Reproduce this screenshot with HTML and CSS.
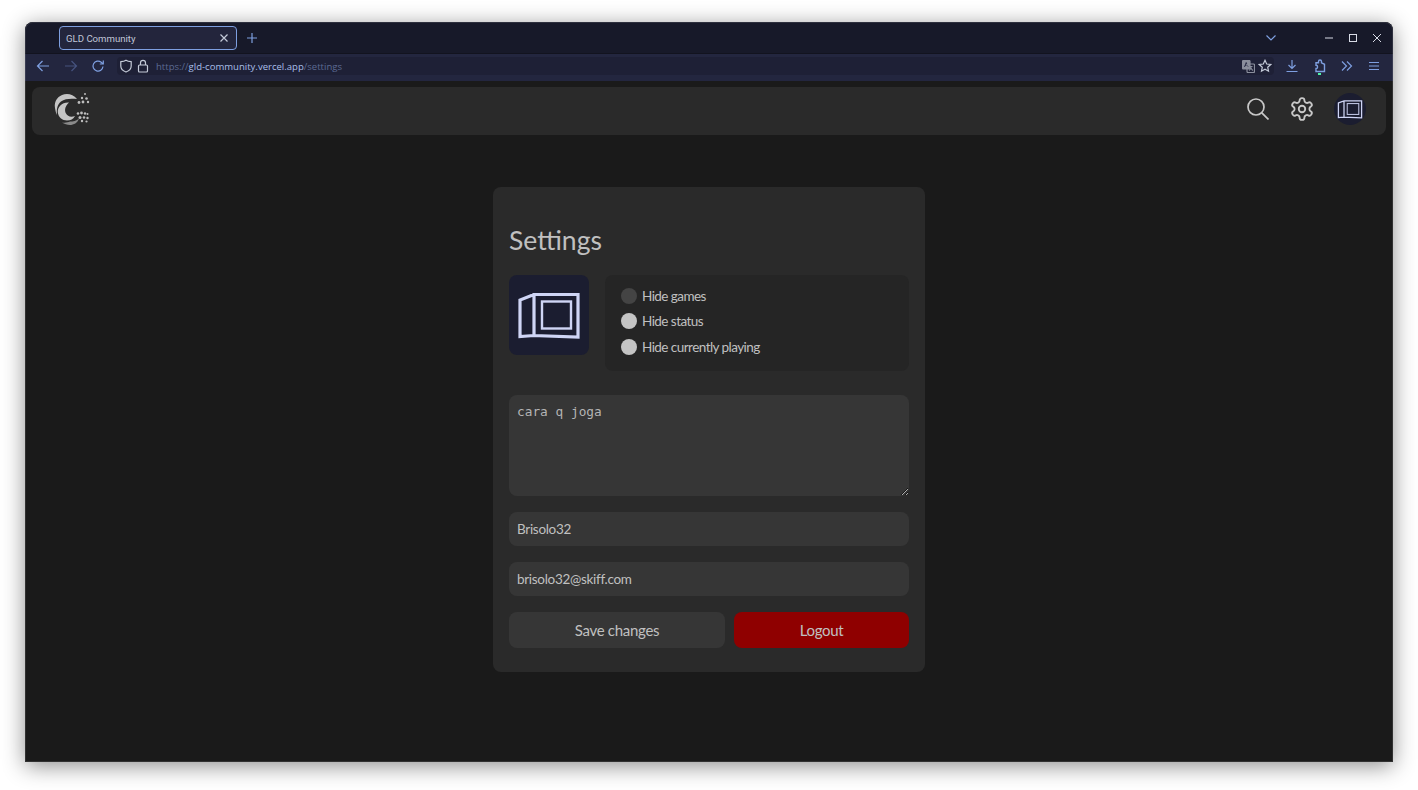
FILE: index.html
```html
<!DOCTYPE html>
<html lang="en">
<head>
<meta charset="utf-8">
<title>GLD Community</title>
<link rel="stylesheet" href="styles.css">
</head>
<body>
<svg class="defs" width="0" height="0" aria-hidden="true">
  <symbol id="avatar" viewBox="0 0 80 80">
    <path class="av-thick" d="M25 19.500H69V62L25 60.500ZM25 19.500L11 25V61.500L25 60.500"/>
    <rect class="av-thin" x="33" y="26.500" width="29" height="27"/>
  </symbol>
</svg>
<div class="window">
  <div class="tabbar">
    <div class="tab">
      <span class="tab-title">GLD Community</span>
      <svg class="ico tab-close" width="10" height="10" viewBox="0 0 10 10"><path d="M1.500 1.500l7 7M8.500 1.500l-7 7"/></svg>
    </div>
    <svg class="ico accent new-tab" width="12" height="12" viewBox="0 0 12 12"><path d="M6 1v10M1 6h10"/></svg>
    <div class="spacer"></div>
    <svg class="ico accent chevron" width="12" height="8" viewBox="0 0 12 8"><path d="M1.500 1.500L6 6l4.500-4.500"/></svg>
    <div class="win-controls">
      <svg class="ico white" width="10" height="10" viewBox="0 0 10 10"><path d="M1 5h8"/></svg>
      <svg class="ico white" width="10" height="10" viewBox="0 0 10 10"><rect x="1.500" y="1.500" width="7" height="7"/></svg>
      <svg class="ico white" width="10" height="10" viewBox="0 0 10 10"><path d="M1 1l8 8M9 1l-8 8"/></svg>
    </div>
  </div>
  <div class="navbar">
    <svg class="ico accent" width="14" height="14" viewBox="0 0 14 14"><path d="M13 7H1.500M6.500 2L1.500 7l5 5"/></svg>
    <svg class="ico dim fwd" width="14" height="14" viewBox="0 0 14 14"><path d="M1 7h11.500M7.500 2l5 5-5 5"/></svg>
    <svg class="ico accent reload" width="14" height="14" viewBox="0 0 14 14"><path d="M12 7.500A5 5 0 1 1 10.200 3.200L12 5M12.300 1.500V5H8.800"/></svg>
    <div class="urlbar">
      <svg class="ico light" width="14" height="14" viewBox="0 0 14 14"><path d="M7 1.200C5.500 2.300 3.500 2.600 1.800 2.700V7c0 3 2.500 5 5.200 6 2.700-1 5.200-3 5.200-6V2.700C10.500 2.600 8.500 2.300 7 1.200Z"/></svg>
      <svg class="ico light lock" width="12" height="14" viewBox="0 0 12 14"><rect x="1.500" y="6" width="9" height="7" rx="1"/><path d="M3.500 6V3.800a2.500 2.500 0 0 1 5 0V6"/></svg>
      <div class="url"><span class="url-dim">https://</span><span class="url-host">gld-community.vercel.app</span><span class="url-dim">/settings</span></div>
      <div class="spacer"></div>
      <svg class="ico grey translate" width="13" height="13" viewBox="0 0 13 13"><rect class="fill-grey" x="0.500" y="0.500" width="7.500" height="8.500" rx="1"/><path class="tr-glyph" d="M2.500 7L4.200 2.500 6 7M3.200 5.500H5.300"/><rect x="5" y="4" width="7.500" height="8.500" rx="1"/><path d="M7.500 6.500h3M9 6.500c0 2-1 3.500-2 4M9 8c.5 1 1 2 2 2.500"/></svg>
      <svg class="ico light star" width="14" height="14" viewBox="0 0 14 14"><path d="M7 1.300l1.700 3.700 4 .5-3 2.700.8 4L7 10.200l-3.500 2 .8-4-3-2.700 4-.5Z"/></svg>
    </div>
    <svg class="ico accent dl" width="14" height="14" viewBox="0 0 14 14"><path d="M7 1v8.500M3.500 6L7 9.500 10.500 6M1.500 12.500h11"/></svg>
    <div class="ext">
      <svg class="ico accent puzzle" width="14" height="14" viewBox="0 0 14 14"><path d="M3 3.800H5.500V2.500a1.500 1.500 0 0 1 3 0V3.800l3 1.500V12.500H3V9.500a1.600 1.600 0 0 0 0-3.200Z"/></svg>
      <span class="ext-dot"></span>
    </div>
    <svg class="ico accent more" width="12" height="12" viewBox="0 0 12 12"><path d="M1 1.500L5.500 6 1 10.500M6 1.500L10.500 6 6 10.500"/></svg>
    <svg class="ico accent menu" width="12" height="12" viewBox="0 0 12 12"><path d="M1 2.500h10M1 6h10M1 9.500h10"/></svg>
  </div>
  <div class="page">
    <header class="topbar">
      <svg class="logo" width="40" height="38" viewBox="12 5 40 38">
        <path class="logo-main" d="M37 14C33 9 27 8 22 10 17 12 14 17 15 23 15.500 26 16 28 17 30 16.500 25 17 19.500 21 16.500 25 13.500 31 13.500 37 14Z"/>
        <path class="logo-main" d="M29 17.500C22 17 17.500 22 17.800 27 18 32 22.500 35.500 27 35.500 30.500 35.500 33.500 34 35 31 31 32.500 27.500 31.500 26 28.500 24 25 25.500 20.500 29 17.500Z"/>
        <path class="logo-fade" d="M22 37.500C28 41.500 36.500 41 39 33.500 36.500 36 33 36.500 30 36.500 28 37.500 25 38 22 37.500Z"/>
        <g class="logo-dots">
          <circle cx="45" cy="9" r="1"/><circle cx="42" cy="13" r="1.200"/><circle cx="46.500" cy="13.500" r="1.300"/><circle cx="39" cy="17.500" r="1.400"/><circle cx="43" cy="17" r="1.400"/><circle cx="48" cy="17" r="1.200"/>
          <circle cx="38" cy="28.500" r="1.300"/><circle cx="41.500" cy="28" r="1.400"/><circle cx="45" cy="28.500" r="1.200"/><circle cx="47.500" cy="29" r="1"/><circle cx="40" cy="32.500" r="1.500"/><circle cx="44" cy="32.500" r="1.300"/><circle cx="47.500" cy="33" r="1.200"/><circle cx="42" cy="36" r="1.200"/><circle cx="46.500" cy="36.500" r="1.100"/>
        </g>
      </svg>
      <div class="spacer"></div>
      <svg class="tool search" width="22" height="22" viewBox="0 0 22 22"><circle cx="9" cy="9" r="8"/><path d="M14.800 14.800L21.500 21.500"/></svg>
      <svg class="tool gear" width="26" height="26" viewBox="0 0 24 24"><path d="M12.220 2h-.44a2 2 0 0 0-2 2v.18a2 2 0 0 1-1 1.730l-.43.25a2 2 0 0 1-2 0l-.15-.08a2 2 0 0 0-2.730.73l-.22.38a2 2 0 0 0 .73 2.730l.15.1a2 2 0 0 1 1 1.720v.51a2 2 0 0 1-1 1.740l-.15.09a2 2 0 0 0-.73 2.730l.22.38a2 2 0 0 0 2.730.73l.15-.08a2 2 0 0 1 2 0l.43.25a2 2 0 0 1 1 1.730V20a2 2 0 0 0 2 2h.44a2 2 0 0 0 2-2v-.18a2 2 0 0 1 1-1.730l.43-.25a2 2 0 0 1 2 0l.15.08a2 2 0 0 0 2.730-.73l.22-.39a2 2 0 0 0-.73-2.730l-.15-.08a2 2 0 0 1-1-1.740v-.5a2 2 0 0 1 1-1.740l.15-.09a2 2 0 0 0 .73-2.730l-.22-.38a2 2 0 0 0-2.730-.73l-.15.08a2 2 0 0 1-2 0l-.43-.25a2 2 0 0 1-1-1.730V4a2 2 0 0 0-2-2z"/><circle cx="12" cy="12" r="3"/></svg>
      <div class="top-avatar"><svg width="32" height="32"><use href="#avatar"/></svg></div>
    </header>
    <main class="card">
      <h1 class="card-title">Settings</h1>
      <div class="profile-row">
        <div class="big-avatar"><svg width="80" height="80"><use href="#avatar"/></svg></div>
        <div class="options">
          <label class="option"><span class="dot dot-off"></span>Hide games</label>
          <label class="option"><span class="dot"></span>Hide status</label>
          <label class="option"><span class="dot"></span>Hide currently playing</label>
        </div>
      </div>
      <textarea class="field bio" spellcheck="false">cara q joga</textarea>
      <input class="field line" type="text" value="Brisolo32">
      <input class="field line" type="text" value="brisolo32@skiff.com">
      <div class="actions">
        <button class="btn btn-save" type="button">Save changes</button>
        <button class="btn btn-logout" type="button">Logout</button>
      </div>
    </main>
  </div>
</div>
</body>
</html>
```
FILE: styles.css
```css
* { box-sizing: border-box; }
html, body { margin: 0; height: 100%; overflow: hidden; }
body {
  background: #fff;
  padding: 22px 25px 28px;
  font-family: Lato, "Noto Sans", sans-serif;
}
.defs { position: absolute; }
.window {
  height: 740px;
  display: flex;
  flex-direction: column;
  border-radius: 8px 8px 0 0;
  overflow: hidden;
  box-shadow: 0 4px 22px rgba(0,0,0,.45);
  background: #1a1a1a;
  outline: 1px solid rgba(255,255,255,.1);
  outline-offset: -1px;
}
.spacer { flex: 1; }
.ico { fill: none; stroke: currentColor; stroke-width: 1.2; flex: none; }
.accent { color: #7e9fe0; }
.white { color: #d8dbe6; stroke-width: 1; }
.dim { color: #46537f; }
.light { color: #c4cad8; }
.grey { color: #8a8e9c; }
.fill-grey { fill: #8a8e9c; }
.tr-glyph { stroke: #23263f; stroke-width: .9; }

.tabbar {
  height: 31px;
  background: #171929;
  display: flex;
  align-items: center;
  padding: 4px 0 3px 34px;
  flex: none;
}
.tab {
  width: 178px;
  height: 24px;
  background: #23253c;
  border: 1px solid #7e9fe0;
  border-radius: 4px;
  display: flex;
  align-items: center;
  justify-content: space-between;
  padding: 0 7px 0 6px;
  color: #c0c6d8;
  font: 9.600px Roboto, sans-serif;
}
.tab-close { color: #c4cad8; }
.new-tab { margin-left: 9px; }
.chevron { margin-right: 47px; }
.win-controls { display: flex; gap: 14px; margin-right: 11px; }

.navbar {
  height: 28px;
  flex: none;
  background: #23263f;
  display: flex;
  align-items: center;
  padding: 0 12px 3px 11px;
  border-top: 1px solid #12131f;
}
.fwd { margin-left: 14px; }
.reload { margin-left: 13px; }
.urlbar {
  margin-left: 12px;
  width: 1157px;
  height: 18px;
  background: #1e2036;
  border-radius: 4px;
  display: flex;
  align-items: center;
  padding: 0 1px 0 2px;
}
.lock { margin-left: 4px; }
.url { margin-left: 7px; font: 9.550px "Open Sans", sans-serif; white-space: nowrap; }
.url-dim { color: #5c6a92; }
.url-host { color: #a9bfe8; }
.translate { margin-right: 3px; }
.star { margin-right: 1px; }
.dl { margin-left: 11px; }
.ext { margin-left: 14px; position: relative; display: flex; }
.puzzle { stroke-width: 1.4; }
.ext-dot {
  position: absolute;
  left: 5px;
  bottom: -2px;
  width: 3px;
  height: 2px;
  background: #4df2a8;
}
.more { margin-left: 14px; }
.menu { margin-left: 15px; }

.page {
  flex: 1;
  background: #1a1a1a;
  padding: 6px 7px 0;
  display: flex;
  flex-direction: column;
  align-items: center;
}
.topbar {
  align-self: stretch;
  height: 48px;
  background: #2a2a2a;
  border-radius: 8px;
  display: flex;
  align-items: center;
  padding: 0 20px;
  flex: none;
}
.logo { margin-bottom: 4px; }
.logo-main { fill: #c4c4c4; }
.logo-fade { fill: #8a8a8a; }
.logo-dots { fill: #bdbdbd; }
.tool { fill: none; stroke: #c8c8c8; stroke-width: 1.700; flex: none; margin-bottom: 4px; }
.search { margin-right: 20px; }
.top-avatar {
  margin-left: 19px;
  margin-bottom: 4px;
  width: 32px;
  height: 32px;
  border-radius: 50%;
  background: #1b1d30;
  display: flex;
}
.av-thick { fill: none; stroke: #cfd5f5; stroke-width: 3.200; stroke-linejoin: miter; }
.av-thin { fill: none; stroke: #cfd5f5; stroke-width: 2.400; }

.card {
  margin-top: 52px;
  width: 432px;
  background: #2a2a2a;
  border-radius: 8px;
  padding: 34px 16px 24px;
  display: flex;
  flex-direction: column;
  color: #c0c0c0;
}
.card-title {
  margin: 0;
  font-size: 26.500px;
  line-height: 38px;
  font-weight: 400;
}
.profile-row { display: flex; gap: 16px; margin-top: 16px; }
.big-avatar {
  width: 80px;
  height: 80px;
  border-radius: 8px;
  background: #1b1d30;
  flex: none;
}
.options {
  flex: 1;
  height: 96px;
  background: #252525;
  border-radius: 8px;
  padding: 9px 16px 12.400px;
  display: flex;
  flex-direction: column;
  justify-content: space-between;
}
.option { display: flex; align-items: center; gap: 5px; font-size: 13.500px; line-height: 24px; letter-spacing: -.55px; }
.dot { width: 16px; height: 16px; border-radius: 50%; background: #c4c4c4; }
.dot-off { background: #444; }
.field {
  display: block;
  width: 100%;
  border: 0;
  outline: 0;
  background: #363636;
  border-radius: 8px;
  color: #c0c0c0;
  padding: 8px;
}
.bio {
  margin-top: 24px;
  height: 101px;
  resize: vertical;
  color: #b4b4b4;
  font: 12.800px/18px "DejaVu Sans Mono", monospace;
}
.line {
  margin-top: 16px;
  height: 34px;
  font: 13.500px Lato, "Noto Sans", sans-serif;
  letter-spacing: -.3px;
}
.actions { display: flex; gap: 9px; margin-top: 16px; }
.btn {
  height: 36px;
  border: 0;
  border-radius: 8px;
  color: #c0c0c0;
  font: 15px Lato, "Noto Sans", sans-serif;
  letter-spacing: -.3px;
}
.btn-save { width: 216px; background: #363636; }
.btn-logout { flex: 1; background: #8f0000; }
```
